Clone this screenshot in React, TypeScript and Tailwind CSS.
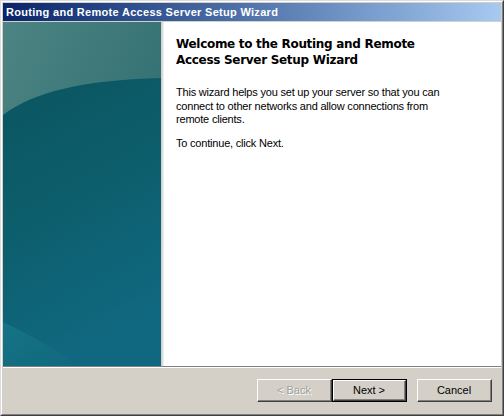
import React from "react";

function SidePanel() {
  return (
    <svg width="158" height="344" viewBox="0 0 158 344" className="block">
      <defs>
        <linearGradient id="bgTop" x1="0" y1="0" x2="1" y2="1">
          <stop offset="0" stopColor="#4d8483" />
          <stop offset="1" stopColor="#266569" />
        </linearGradient>
        <linearGradient id="bgLow" x1="0" y1="0" x2="0.3" y2="1">
          <stop offset="0" stopColor="#0a5560" />
          <stop offset="0.5" stopColor="#0d5e6c" />
          <stop offset="1" stopColor="#106880" />
        </linearGradient>
        <linearGradient id="bl" x1="0" y1="0" x2="1" y2="1">
          <stop offset="0" stopColor="#1a7e8e" />
          <stop offset="1" stopColor="#11687c" />
        </linearGradient>
      </defs>
      <rect width="158" height="344" fill="url(#bgTop)" />
      <path d="M0 93 C 30 70, 80 58, 158 56 L158 344 L0 344 Z" fill="url(#bgLow)" />
      <path d="M0 300 C 25 312, 50 325, 75 344 L0 344 Z" fill="url(#bl)" opacity="0.6" />
    </svg>
  );
}

function Btn({
  children,
  disabled,
  isDefault,
  className = "",
}: {
  children: React.ReactNode;
  disabled?: boolean;
  isDefault?: boolean;
  className?: string;
}) {
  const inner = (
    <div className="w-full h-full border-t border-l border-white border-r border-b border-r-[#404040] border-b-[#404040]">
      <div className="w-full h-full border-r border-b border-r-[#808080] border-b-[#808080] flex items-center justify-center">
        <span
          className={
            disabled
              ? "text-[#a0a0a0] [text-shadow:1px_1px_0_#ffffff]"
              : "text-black"
          }
        >
          {children}
        </span>
      </div>
    </div>
  );
  return (
    <div
      className={
        "w-[75px] h-[23px] bg-[#d4d0c8] text-[11px] " +
        (isDefault ? "border border-black " : "") +
        className
      }
    >
      {inner}
    </div>
  );
}

export default function App() {
  return (
    <div
      className="w-[504px] h-[416px] bg-[#d4d0c8] border border-t-[#dcdcdc] border-l-[#dcdcdc] border-r-[#404040] border-b-[#404040]"
      style={{ fontFamily: '"Liberation Sans", Arial, sans-serif' }}
    >
      <div className="w-full h-full border border-t-white border-l-white border-r-[#808080] border-b-[#808080] p-[1px] flex flex-col">
        <div className="h-[18px] bg-gradient-to-r from-[#0a246a] to-[#a6caf0] flex items-center pl-[3px] shrink-0">
          <span className="text-white font-bold text-[11px] leading-none tracking-[0.3px]">
            Routing and Remote Access Server Setup Wizard
          </span>
        </div>
        <div className="h-[344px] mt-[1px] flex bg-white shrink-0">
          <div className="w-[158px] shrink-0">
            <SidePanel />
          </div>
          <div className="w-[3px] bg-gradient-to-r from-[#c8c8c8] to-[#f4f4f4] shrink-0" />
          <div className="flex-1 pl-[12px] pt-[14px] pr-[10px]">
            <h1
              className="text-[12px] font-bold leading-[16px] text-black tracking-[-0.3px]"
              style={{ fontFamily: '"DejaVu Sans", Verdana, sans-serif' }}
            >
              Welcome to the Routing and Remote
              <br />
              Access Server Setup Wizard
            </h1>
            <p className="mt-[18px] text-[11px] leading-[13.5px] text-black tracking-[-0.2px]">
              This wizard helps you set up your server so that you can
              <br />
              connect to other networks and allow connections from
              <br />
              remote clients.
            </p>
            <p className="mt-[10px] text-[11px] leading-[13px] text-black tracking-[-0.2px]">
              To continue, click Next.
            </p>
          </div>
        </div>
        <div className="h-[1px] bg-[#808080] shrink-0" />
        <div className="h-[1px] bg-white shrink-0" />
        <div className="flex-1 flex items-start justify-end pt-[11px] pr-[9px]">
          <Btn disabled>&lt; Back</Btn>
          <Btn isDefault>Next &gt;</Btn>
          <Btn className="ml-[10px]">Cancel</Btn>
        </div>
      </div>
    </div>
  );
}
